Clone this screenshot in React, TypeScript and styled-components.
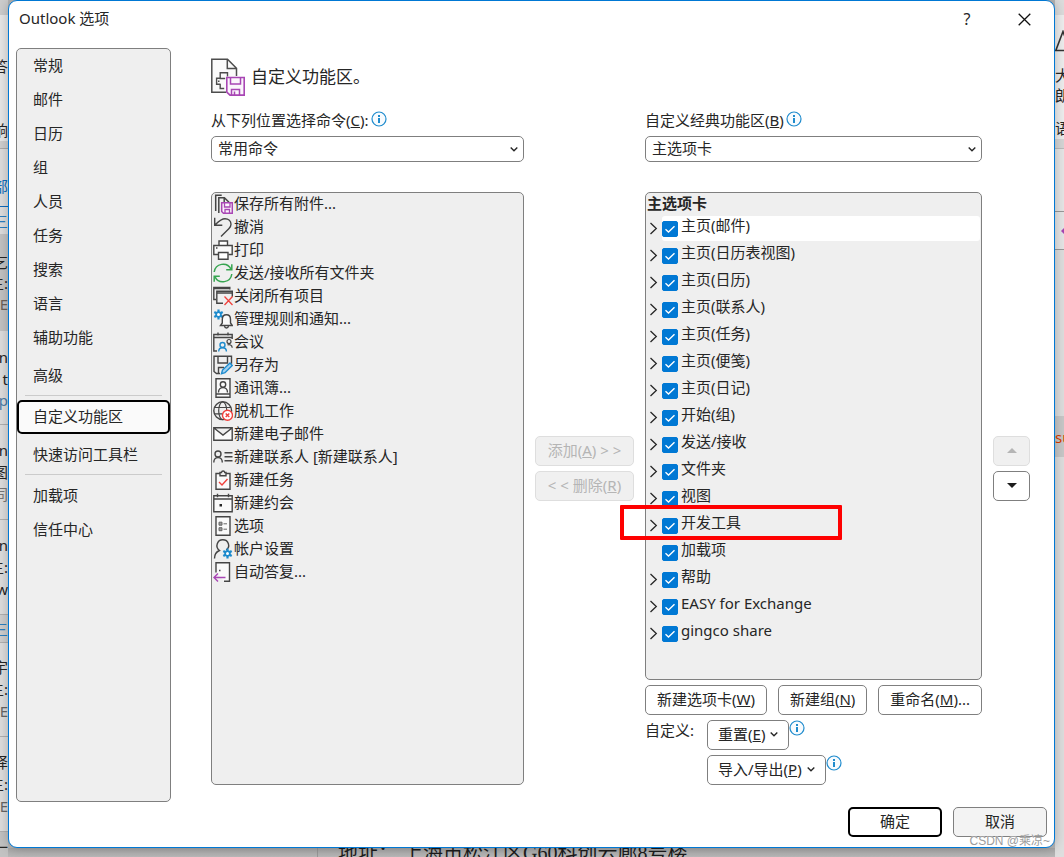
import React, { ReactNode, useState } from "react";
import styled, { createGlobalStyle, css } from "styled-components";

const ink = "#262626";
const line = "#7f7f7f";
const blue = "#0078d4";
const purple = "#a846b4";
const red = "#f0413c";
const panel = "#efefef";

const GlobalStyle = createGlobalStyle`
  * { box-sizing: border-box; }
  body {
    margin: 0;
    color: ${ink};
    background: #b6b6b6;
    font-family: "Noto Sans", "Noto Sans CJK SC", sans-serif;
    font-size: 15px;
    line-height: 20px;
  }
  button, select, input { font: inherit; color: inherit; margin: 0; }
  svg { display: block; flex: none; }
`;

/* ---------- mail window behind the dialog ---------- */

const Page = styled.div`
  position: relative;
  display: flex;
  min-height: 100vh;
  padding: 0 9px 9px 8px;
  overflow: hidden;
`;

const MailWindow = styled.div`
  position: absolute;
  inset: 0;
  display: flex;
  overflow: hidden;
`;

const Edge = styled.div<{ $width: number }>`
  display: flex;
  flex-direction: column;
  flex: none;
  width: ${(p) => p.$width}px;
  background: #dedede;
  overflow: hidden;
`;

const Strip = styled.div<{ $h: number; $bg?: string; $color?: string; $rule?: string; $side?: string }>`
  display: flex;
  flex: none;
  align-items: center;
  justify-content: ${(p) => p.$side || "flex-end"};
  height: ${(p) => p.$h}px;
  background: ${(p) => p.$bg || "transparent"};
  color: ${(p) => p.$color || ink};
  border-bottom: ${(p) => (p.$rule ? `1px solid ${p.$rule}` : "0")};
  white-space: nowrap;
`;

const MessageFoot = styled.div`
  display: flex;
  flex: 1;
  align-items: flex-end;
  overflow: hidden;
  background: linear-gradient(to bottom, #b6b6b6 0 calc(100% - 9px), #a8a8a8 calc(100% - 9px), #b8b8b8);
`;

const FootGutter = styled.div`
  flex: none;
  width: 310px;
  height: 9px;
  border-right: 1px solid #989898;
`;

const FootText = styled.div`
  height: 14px;
  padding-left: 20px;
  font-family: "Liberation Serif", "Noto Sans CJK SC", serif;
  font-size: 20px;
  line-height: 20px;
  color: #1c1c1c;
  white-space: pre;
`;

/* ---------- dialog ---------- */

const Dialog = styled.main`
  position: relative;
  display: flex;
  flex: 1;
  flex-direction: column;
  min-width: 0;
  background: #fff;
  border: 1px solid ${blue};
  border-radius: 9px;
  box-shadow: 0 0 12px rgba(0, 0, 0, 0.25);
`;

const TitleBar = styled.header`
  display: flex;
  align-items: flex-start;
  height: 47px;
  padding: 0 7px 0 10px;
`;

const Title = styled.h1`
  flex: 1;
  margin: 0;
  padding-top: 7px;
  font-size: 15px;
  font-weight: 400;
`;

const CaptionButton = styled.button`
  display: flex;
  align-items: center;
  justify-content: center;
  width: 46px;
  height: 36px;
  margin-left: 11px;
  padding: 0;
  border: 0;
  background: none;
  font-size: 16px;
`;

const Body = styled.div`
  display: flex;
  flex: 1;
  padding: 0 24px 5px 7px;
`;

const Sidebar = styled.nav`
  display: flex;
  flex: none;
  flex-direction: column;
  width: 155px;
  background: ${panel};
  border: 1px solid ${line};
  border-radius: 5px;
`;

const NavGroup = styled.div<{ $spaced?: boolean }>`
  display: flex;
  flex-direction: column;
  gap: ${(p) => (p.$spaced ? 4 : 0)}px;
`;

const NavItem = styled.button<{ $active?: boolean }>`
  height: 34px;
  padding: 0 14px 2px;
  text-align: left;
  background: ${(p) => (p.$active ? "#fafafa" : "transparent")};
  border: 2px solid ${(p) => (p.$active ? "#000" : "transparent")};
  border-radius: 5px;
`;

const Divider = styled.hr`
  width: 137px;
  height: 1px;
  margin: 2px 8px 4px;
  border: 0;
  background: #cbcbcb;
`;

const Content = styled.section`
  display: flex;
  flex: 1;
  flex-direction: column;
  min-width: 0;
  padding: 10px 0 12px 40px;
`;

const Heading = styled.div`
  display: flex;
  align-items: center;
  gap: 6px;
  height: 38px;
  margin-bottom: 15px;
`;

const HeadingText = styled.h2`
  margin: 0;
  font-size: 17px;
  font-weight: 400;
`;

const Columns = styled.div`
  display: grid;
  flex: 1;
  grid-template-columns: minmax(0, 313fr) 99px minmax(0, 337fr) 37px;
  gap: 11px;
  padding-bottom: 5px;
`;

const Column = styled.div`
  display: flex;
  flex-direction: column;
`;

const ButtonColumn = styled(Column)`
  gap: 5px;
  padding-top: 325px;
`;

const FieldLabel = styled.div`
  display: flex;
  align-items: flex-start;
  gap: 2px;
  height: 25px;
  line-height: 18px;
  white-space: nowrap;
`;

const SelectBox = styled.div`
  position: relative;
  margin-bottom: 30px;
`;

const Select = styled.select`
  display: block;
  width: 100%;
  height: 26px;
  padding: 0 24px 2px 6px;
  appearance: none;
  background: #fff;
  border: 1px solid ${line};
  border-radius: 5px;
`;

const SelectArrow = styled.span`
  position: absolute;
  top: 9px;
  right: 6px;
  pointer-events: none;
`;

const listBox = css`
  flex: 1;
  margin: 0;
  padding: 0 1px;
  list-style: none;
  background: ${panel};
  border: 1px solid ${line};
  border-radius: 5px;
`;

const CommandList = styled.ul`
  ${listBox}
`;

const Command = styled.li`
  display: flex;
  align-items: flex-start;
  gap: 1px;
  height: 23px;
  white-space: nowrap;
  > svg { margin-top: 1px; }
`;

const Tree = styled.ul`
  ${listBox}
`;

const TreeTitle = styled.li`
  height: 23px;
  font-weight: 700;
  line-height: 20px;
`;

const TreeRow = styled.li`
  position: relative;
  display: flex;
  height: 27px;
`;

const Expander = styled.button`
  display: flex;
  flex: none;
  width: 15px;
  height: 24px;
  padding: 6px 0 0 2px;
  border: 0;
  background: none;
`;

const TreeLabel = styled.label<{ $current?: boolean }>`
  display: flex;
  flex: 1;
  gap: 3px;
  height: 25px;
  line-height: 19px;
  border-radius: 3px;
  background: ${(p) => (p.$current ? "#fff" : "transparent")};
`;

const TickBox = styled.span`
  display: grid;
  flex: none;
  width: 16px;
  height: 16px;
  margin-top: 5px;
  > * { grid-area: 1 / 1; }
`;

const Tick = styled.input`
  width: 16px;
  height: 16px;
  appearance: none;
  background: #fff;
  border: 1px solid ${blue};
  border-radius: 2px;
  &:checked { background: ${blue}; }
`;

const RedFrame = styled.span`
  position: absolute;
  top: -8px;
  left: -27px;
  width: 222px;
  height: 35px;
  border: 4px solid #fe0000;
  border-radius: 1px;
  pointer-events: none;
`;

const Button = styled.button<{ $primary?: boolean; $tone?: string }>`
  display: flex;
  align-items: center;
  justify-content: center;
  gap: 5px;
  height: 30px;
  padding: 0 10px 2px;
  background: ${(p) => p.$tone || "#fff"};
  border: ${(p) => (p.$primary ? "2px solid #000" : `1px solid ${line}`)};
  border-radius: 5px;
  white-space: nowrap;
  &:disabled {
    color: #b5b5b5;
    background: #f0f0f0;
    border-color: #dedede;
  }
`;

const TabActions = styled.div`
  display: flex;
  gap: 11px;
  margin: 5px 0;
  > button { flex: 1 0 auto; padding: 0 9px 2px; }
`;

const CustomGrid = styled.div`
  display: grid;
  grid-template-columns: 62px 1fr;
`;

const CustomActions = styled.div`
  display: flex;
  flex-direction: column;
  gap: 5px;
`;

const ActionWithInfo = styled.div`
  display: flex;
  align-items: flex-start;
`;

const Footer = styled.footer`
  display: flex;
  justify-content: flex-end;
  gap: 11px;
  padding: 0 7px 10px;
  > button { width: 94px; }
`;

const Watermark = styled.div`
  position: absolute;
  right: 14px;
  bottom: 6px;
  color: #9c9c9c;
  font-family: "Liberation Sans", "Noto Sans CJK SC", sans-serif;
  font-size: 12px;
  text-shadow: 0 0 1px #fff;
`;

/* ---------- drawings ---------- */

const InfoIcon = () => (
  <svg width="16" height="16" viewBox="0 0 16 16" fill="none">
    <circle cx="8" cy="8" r="7" stroke="#1e8bcd" strokeWidth="1.2" fill="#f7fbfe" />
    <path d="M8 7v5M8 4v2" stroke="#1e8bcd" strokeWidth="2" />
  </svg>
);

const ChevronDown = () => (
  <svg width="8" height="8" viewBox="0 0 8 8" fill="none">
    <path d="M.7 2.5 4 5.7 7.3 2.5" stroke={ink} strokeWidth="1.4" />
  </svg>
);

const ChevronRight = () => (
  <svg width="9" height="13" viewBox="0 0 9 13" fill="none">
    <path d="M1.5 1 7.3 6.5 1.5 12" stroke={ink} strokeWidth="1.3" />
  </svg>
);

const CheckMark = () => (
  <svg width="16" height="16" viewBox="0 0 16 16" fill="none" pointerEvents="none">
    <path d="M3.5 8.2 6.5 11 12.5 5.2" stroke="#fff" strokeWidth="1.4" />
  </svg>
);

const FontSizeGlyph = () => (
  <svg width="20" height="22" viewBox="0 0 20 22" fill="none">
    <path d="M.8 20.500 8 1.500 15.200 20.500z" stroke="#333" strokeWidth="1.600" />
  </svg>
);

const ReplyDot = () => (
  <svg width="12" height="8" viewBox="0 0 12 8">
    <path d="M6 4 10 0v8z" fill={purple} />
  </svg>
);

const HeadingIcon = () => (
  <svg width="34" height="38" viewBox="0 0 34 38" fill="none">
    <path d="M.8 1.2h15.7l9 9V34H.8z" fill="#fafafa" />
    <path d="M15 34.3H.8V1.2h15.7l9 9V18M16.3 1.2v9.3h9.2" stroke="#4d4d4d" strokeWidth="1.5" />
    <path d="M16.5 18.5V14.8H9.2v5.7h5M9 20.2H5.6v6h4M9.2 26v4.5h4M7 23.2h1.5" stroke="#4d4d4d" strokeWidth="1.4" />
    <path d="M15.8 19.5h17.4v17.6H19l-3.2-3z" fill="#fbf5fc" stroke={purple} strokeWidth="1.6" />
    <path d="M19.5 20v6h10v-6M20.5 37v-5.5h8V37M23.5 33.5V37" stroke={purple} strokeWidth="1.5" />
  </svg>
);

const Gear = ({ x, y }: { x: number; y: number }) => (
  <g transform={`translate(${x} ${y})`} stroke="none">
    <path d="M0-4.900V4.900M-4.200-2.450 4.200 2.450M-4.200 2.450 4.200-2.450" stroke="#1e8bcd" strokeWidth="2.200" />
    <circle r="3.200" fill="#1e8bcd" />
    <circle r="1.500" fill="#fff" />
  </g>
);

const drawings: Record<string, ReactNode> = {
  saveAll: (
    <>
      <path d="M2.7 17V1.3h6M5.8 19V3.7h5.6l4.6 4.5M11.2 4v4.5" strokeWidth="1.5" />
      <path d="M8.7 8.7h10.6v10.6H10.5l-1.8-1.8z" fill="#fbf5fc" stroke={purple} strokeWidth="1.5" />
      <path d="M11.5 9v4h5.5V9M12 19v-3.5h4.5V19" stroke={purple} strokeWidth="1.3" />
    </>
  ),
  undo: <path d="M1.7.8v7.5h7.6M2 8C5.5 4.5 8 1.7 12 1.7c3.500 0 6 2.400 6 5.500 0 1.800-.8 3.200-2.200 4.600L8 19.500" />,
  print: (
    <>
      <path d="M6 5.500V1h8.500v4.500" fill="#fff" />
      <path d="M5 14.500H.8v-9h18.400v9H15.500M3 8h1.500" fill="#fafafa" />
      <path d="M5.500 12.500h9.500v6.700H5.500z" fill="#fff" />
    </>
  ),
  refresh: (
    <>
      <path d="M1.200 9A8.900 8.900 0 0 1 18 6.200M18.800 11A8.900 8.900 0 0 1 2 13.800" stroke="#38a551" strokeWidth="1.500" />
      <path d="M18.800 1.200v5.600h-5.600M1.200 18.800v-5.600h5.600" stroke="#38a551" strokeWidth="1.500" />
    </>
  ),
  closeAll: (
    <>
      <path d="M3 13.500H.8V1.500h16V3.500M.8 2.500h16" />
      <path d="M10 17.300H3.800V5.300h15.500v5.500M3.800 7h15.500" />
      <path d="m11.500 10.500 8 8.500m0-8.500-8 8.500" stroke={red} strokeWidth="1.300" />
    </>
  ),
  rules: (
    <>
      <Gear x={5.5} y={5.5} />
      <path d="M7.500 16.500h11.800L17.500 14v-3.500c0-2.700-1.700-4.700-4.100-4.700S9.300 7.800 9.300 10.500V14zM11.500 17c.3 2.700 3.600 2.700 4 0" fill="#fafafa" />
    </>
  ),
  meeting: (
    <>
      <path d="M4 19H.8V2.500h18.400V7M.8 5.500h18.400M5 .5v3M15 .5v3" />
      <circle cx="16" cy="9.500" r="2" strokeWidth="1.200" />
      <path d="M14.500 13c2-1.200 4.700.2 4.700 2.700" strokeWidth="1.200" />
      <circle cx="9.500" cy="13" r="2.500" stroke="#1e8bcd" />
      <path d="M5.700 19.500c0-5 7.700-5 7.700 0" stroke="#1e8bcd" />
    </>
  ),
  saveAs: (
    <>
      <path d="M7 18.500H3.500L1 16.500V1.200h17.500v7.500M5 1.500V8h9.500V1.500M5.500 18.500v-6H11" />
      <path d="m8.500 18.800 1-3.800 7.500-7 2.300 2.500-7.300 7.200z" fill="#9fd0f0" stroke="#1e8bcd" />
    </>
  ),
  book: (
    <>
      <path d="M3 .8h14v18.400H3zM3 16h14" fill="#fafafa" />
      <circle cx="10" cy="6.500" r="2.700" />
      <path d="M5.500 14.500c0-6.500 9-6.500 9 0" />
    </>
  ),
  offline: (
    <>
      <circle cx="9.700" cy="9.700" r="8.900" />
      <ellipse cx="9.700" cy="9.700" rx="4" ry="8.900" strokeWidth="1.200" />
      <path d="M1.500 6.500h16.500M1.500 12.800h10" strokeWidth="1.200" />
      <circle cx="14.500" cy="14.300" r="5" fill="#fff" stroke={red} />
      <path d="m12.700 12.500 3.600 3.600m0-3.600-3.600 3.600" stroke={red} />
    </>
  ),
  mail: <path d="M.8 3.800h18.400v12.500H.8zM1 4l9 7 9-7" fill="#fafafa" />,
  contact: (
    <>
      <circle cx="5" cy="7" r="3" />
      <path d="M.8 15.500c0-6.500 8.500-6.500 8.500 0M11.500 5.800h8M11.500 9.800h8M11.500 13.800h8" />
    </>
  ),
  task: (
    <>
      <path d="M7 3.500H3v15.700h14V3.500h-4M7 2.500h1.500C8.700.5 11.500.5 11.700 2.500H13v3.300H7z" fill="#fafafa" />
      <path d="m6 12 3 3 5.500-6" stroke={red} />
    </>
  ),
  appointment: (
    <>
      <path d="M.8 2.800h18.400v16H.8zM.8 6h18.400M4.500.8v3.500M15.500.8v3.500" fill="#fafafa" />
      <path d="M6.500 11h2.500v2.500H6.500z" fill={ink} stroke="none" />
    </>
  ),
  options: (
    <>
      <path d="M3 .8h14v18.400H3z" fill="#fafafa" />
      <path d="M6 6.200h3v3H6zM6 11.700h3v3H6z" strokeWidth="1" stroke="#666" fill="#999" />
      <path d="M10.500 7.800H14M10.500 13.200H14" strokeWidth="1" stroke="#666" />
    </>
  ),
  account: (
    <>
      <path d="M1.500 19.500c0-3.800 2-6.800 5-8C1.500 7.500 4.500.8 9.700.8c6 0 8 7 3.500 10.200" />
      <Gear x={14.5} y={14.5} />
    </>
  ),
  autoReply: (
    <>
      <path d="M3 10.500V.8h13.500v18.400H11" fill="#fafafa" />
      <path d="M6 8.500h1.500" />
      <path d="M12.500 15.500H1M5 11.500l-4 4 4 4" stroke={purple} />
    </>
  ),
};

const CommandIcon = ({ name }: { name: string }) => (
  <svg width="20" height="20" viewBox="0 0 20 20" fill="none" stroke="#454545" strokeWidth="1.4">
    {drawings[name]}
  </svg>
);

/* ---------- data ---------- */

const commands: [string, string][] = [
  ["saveAll", "保存所有附件..."],
  ["undo", "撤消"],
  ["print", "打印"],
  ["refresh", "发送/接收所有文件夹"],
  ["closeAll", "关闭所有项目"],
  ["rules", "管理规则和通知..."],
  ["meeting", "会议"],
  ["saveAs", "另存为"],
  ["book", "通讯簿..."],
  ["offline", "脱机工作"],
  ["mail", "新建电子邮件"],
  ["contact", "新建联系人 [新建联系人]"],
  ["task", "新建任务"],
  ["appointment", "新建约会"],
  ["options", "选项"],
  ["account", "帐户设置"],
  ["autoReply", "自动答复..."],
];

const tabs = [
  "主页(邮件)", "主页(日历表视图)", "主页(日历)", "主页(联系人)", "主页(任务)", "主页(便笺)",
  "主页(日记)", "开始(组)", "发送/接收", "文件夹", "视图", "开发工具", "加载项", "帮助",
  "EASY for Exchange", "gingco share",
];

type StripData = { h: number; t?: ReactNode; bg?: string; color?: string; rule?: string };

const leftStrips: StripData[] = [
  { h: 15, bg: "#cdcdcd" }, { h: 41, bg: "#e8e8e8" }, { h: 20, t: "答", bg: "#e8e8e8" },
  { h: 42, bg: "#e8e8e8" }, { h: 23, t: "响", bg: "#e8e8e8" }, { h: 8, bg: "#cfcfcf", rule: "#aaa" },
  { h: 27 }, { h: 20, t: "部", color: "#0f6cbd" }, { h: 11, rule: "#0f6cbd" },
  { h: 27, t: "三", color: "#2b7fc0" }, { h: 17, bg: "#c3c3c3" }, { h: 22, t: "乞", bg: "#c3c3c3" },
  { h: 20, t: "主:", bg: "#c3c3c3" }, { h: 22, t: "TE", bg: "#c3c3c3", color: "#6d6258" },
  { h: 16, bg: "#c3c3c3" }, { h: 15 }, { h: 22, t: "n" }, { h: 22, t: "t" },
  { h: 20, t: "tp", color: "#4a7ba6" }, { h: 15, rule: "#b0b0b0" }, { h: 14 }, { h: 22, t: "n" },
  { h: 22, t: "图" }, { h: 22, t: "同", color: "#777" }, { h: 15, rule: "#b0b0b0" }, { h: 14 },
  { h: 22, t: "n" }, { h: 22, t: "主:" }, { h: 22, t: "w" }, { h: 15, rule: "#b0b0b0" },
  { h: 28, t: "三", color: "#2b7fc0", bg: "#cfcfcf", rule: "#b0b0b0" }, { h: 13 },
  { h: 22, t: "宇" }, { h: 22, t: "主:" }, { h: 22, t: "TE", color: "#666" },
  { h: 15, rule: "#b0b0b0" }, { h: 14 }, { h: 22, t: "译" }, { h: 22, t: "主:" },
  { h: 22, t: "TE", color: "#666" }, { h: 15, rule: "#b0b0b0" }, { h: 30, t: "一", bg: "#c2c2c2" },
];

const rightStrips: StripData[] = [
  { h: 15, bg: "#dcdcdc" }, { h: 14, bg: "#eee" }, { h: 24, t: <FontSizeGlyph />, bg: "#eee" }, { h: 12, bg: "#eee" },
  { h: 20, t: "大", bg: "#eee" }, { h: 20, t: "朗", bg: "#eee" }, { h: 12, bg: "#eee" },
  { h: 22, t: "语", bg: "#eee" }, { h: 10, bg: "#d6d6d6", rule: "#bbb" }, { h: 63, bg: "#e6e6e6", rule: "#999" },
  { h: 38, bg: "#e6e6e6", t: <ReplyDot />, rule: "#999" }, { h: 166 },
  { h: 41, t: "su", bg: "#c8c8c8", color: "#d83b01" },
];

const Mnemonic = ({ before, keyName, after = "" }: { before: string; keyName: string; after?: string }) => (
  <span>
    {before}(<u>{keyName}</u>){after}
  </span>
);

const Dropdown = ({ id, options }: { id: string; options: string[] }) => (
  <SelectBox>
    <Select id={id}>
      {options.map((o) => (
        <option key={o}>{o}</option>
      ))}
    </Select>
    <SelectArrow>
      <ChevronDown />
    </SelectArrow>
  </SelectBox>
);

const TreeItem = ({ name, current, expandable, framed }: { name: string; current: boolean; expandable: boolean; framed: boolean }) => {
  const [checked, setChecked] = useState(true);
  return (
    <TreeRow>
      <Expander aria-label={`展开 ${name}`} disabled={!expandable}>
        {expandable && <ChevronRight />}
      </Expander>
      <TreeLabel $current={current}>
        <TickBox>
          <Tick type="checkbox" checked={checked} onChange={() => setChecked(!checked)} />
          {checked && <CheckMark />}
        </TickBox>
        {name}
      </TreeLabel>
      {framed && <RedFrame />}
    </TreeRow>
  );
};

export default function App() {
  return (
    <>
      <GlobalStyle />
      <Page>
        <MailWindow aria-hidden="true">
          <Edge $width={8}>
            {leftStrips.map((s, i) => (
              <Strip key={i} $h={s.h} $bg={s.bg} $color={s.color} $rule={s.rule}>{s.t}</Strip>
            ))}
          </Edge>
          <MessageFoot>
            <FootGutter />
            <FootText>地址： 上海市松江区G60科创云廊8号楼</FootText>
          </MessageFoot>
          <Edge $width={9}>
            {rightStrips.map((s, i) => (
              <Strip key={i} $h={s.h} $bg={s.bg} $color={s.color} $rule={s.rule} $side="flex-start">{s.t}</Strip>
            ))}
          </Edge>
        </MailWindow>

        <Dialog>
          <TitleBar>
            <Title>Outlook 选项</Title>
            <CaptionButton aria-label="帮助">?</CaptionButton>
            <CaptionButton aria-label="关闭">
              <svg width="13" height="13" viewBox="0 0 13 13" fill="none">
                <path d="m.7.7 11.600 11.600M12.300.7.7 12.300" stroke="#111" strokeWidth="1.300" />
              </svg>
            </CaptionButton>
          </TitleBar>

          <Body>
            <Sidebar>
              <NavGroup>
                {["常规", "邮件", "日历", "组", "人员", "任务", "搜索", "语言"].map((t) => (
                  <NavItem key={t}>{t}</NavItem>
                ))}
              </NavGroup>
              <NavGroup $spaced>
                <NavItem>辅助功能</NavItem>
                <NavItem>高级</NavItem>
              </NavGroup>
              <Divider />
              <NavGroup $spaced>
                <NavItem $active>自定义功能区</NavItem>
                <NavItem>快速访问工具栏</NavItem>
              </NavGroup>
              <Divider />
              <NavGroup>
                <NavItem>加载项</NavItem>
                <NavItem>信任中心</NavItem>
              </NavGroup>
            </Sidebar>

            <Content>
              <Heading>
                <HeadingIcon />
                <HeadingText>自定义功能区。</HeadingText>
              </Heading>
              <Columns>
                <Column>
                  <FieldLabel>
                    <label htmlFor="source">
                      <Mnemonic before="从下列位置选择命令" keyName="C" after=":" />
                    </label>
                    <InfoIcon />
                  </FieldLabel>
                  <Dropdown id="source" options={["常用命令"]} />
                  <CommandList>
                    {commands.map(([icon, name]) => (
                      <Command key={name}>
                        <CommandIcon name={icon} />
                        {name}
                      </Command>
                    ))}
                  </CommandList>
                </Column>

                <ButtonColumn>
                  <Button disabled>
                    <Mnemonic before="添加" keyName="A" after=" > >" />
                  </Button>
                  <Button disabled>
                    <Mnemonic before="< < 删除" keyName="R" />
                  </Button>
                </ButtonColumn>

                <Column>
                  <FieldLabel>
                    <label htmlFor="target">
                      <Mnemonic before="自定义经典功能区" keyName="B" />
                    </label>
                    <InfoIcon />
                  </FieldLabel>
                  <Dropdown id="target" options={["主选项卡"]} />
                  <Tree>
                    <TreeTitle>主选项卡</TreeTitle>
                    {tabs.map((t, i) => (
                      <TreeItem key={t} name={t} current={i === 0} expandable={t !== "加载项"} framed={t === "开发工具"} />
                    ))}
                  </Tree>
                  <TabActions>
                    <Button><Mnemonic before="新建选项卡" keyName="W" /></Button>
                    <Button><Mnemonic before="新建组" keyName="N" /></Button>
                    <Button><Mnemonic before="重命名" keyName="M" after="..." /></Button>
                  </TabActions>
                  <CustomGrid>
                    <span>自定义:</span>
                    <CustomActions>
                      <ActionWithInfo>
                        <Button><Mnemonic before="重置" keyName="E" /><ChevronDown /></Button>
                        <InfoIcon />
                      </ActionWithInfo>
                      <ActionWithInfo>
                        <Button><Mnemonic before="导入/导出" keyName="P" /><ChevronDown /></Button>
                        <InfoIcon />
                      </ActionWithInfo>
                    </CustomActions>
                  </CustomGrid>
                </Column>

                <ButtonColumn>
                  <Button disabled aria-label="上移">
                    <svg width="10" height="5" viewBox="0 0 10 5"><path d="M0 5 5 0l5 5z" fill="#b5b5b5" /></svg>
                  </Button>
                  <Button aria-label="下移">
                    <svg width="10" height="5" viewBox="0 0 10 5"><path d="M0 0h10L5 5z" fill="#1c1c1c" /></svg>
                  </Button>
                </ButtonColumn>
              </Columns>
            </Content>
          </Body>

          <Footer>
            <Button $primary>确定</Button>
            <Button $tone="#f3f3f3">取消</Button>
          </Footer>
        </Dialog>
        <Watermark>CSDN @乘凉~</Watermark>
      </Page>
    </>
  );
}
